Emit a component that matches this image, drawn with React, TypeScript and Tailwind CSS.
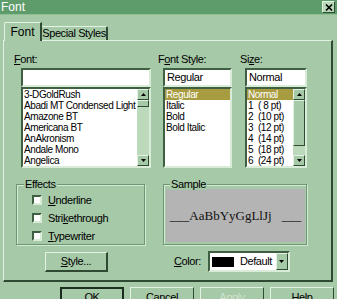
import React from 'react';

const fonts = [
    '3-DGoldRush',
    'Abadi MT Condensed Light',
    'Amazone BT',
    'Americana BT',
    'AnAkronism',
    'Andale Mono',
    'Angelica',
];
const styles = ['Regular', 'Italic', 'Bold', 'Bold Italic'];
const sizes = ['Normal', '1  ( 8 pt)', '2  (10 pt)', '3  (12 pt)', '4  (14 pt)', '5  (18 pt)', '6  (24 pt)'];

// raised 3D edge used by buttons and scroll parts
const raised = 'border border-t-[#e4f2e4] border-l-[#e4f2e4] border-r-[#2e4a32] border-b-[#2e4a32]';
const sunken = 'border-2 border-t-[#3f5f43] border-l-[#3f5f43] border-r-[#d8ecd8] border-b-[#d8ecd8]';

function Arrow({ down }: { down?: boolean }) {
    return (
        <svg width="5" height="3" viewBox="0 0 5 3">
            {down ? <path d="M0 0h5L2.5 3z" fill="#000" /> : <path d="M0 3h5L2.5 0z" fill="#000" />}
        </svg>
    );
}

function ScrollBar({ thumbTop, thumbHeight }: { thumbTop: number; thumbHeight: number }) {
    return (
        <div className="w-[12px] h-full flex flex-col bg-[#bcd9bc] shrink-0">
            <div className={`h-[11px] bg-[#a6c9a7] flex items-center justify-center ${raised}`}>
                <Arrow />
            </div>
            <div className="flex-1 relative">
                <div
                    className={`absolute left-0 right-0 bg-[#a6c9a7] ${raised}`}
                    style={{ top: thumbTop, height: thumbHeight }}
                />
            </div>
            <div className={`h-[11px] bg-[#a6c9a7] flex items-center justify-center ${raised}`}>
                <Arrow down />
            </div>
        </div>
    );
}

function ListBox({ items, selected, scroll }: { items: string[]; selected?: number; scroll?: [number, number] }) {
    return (
        <div className={`h-[81px] bg-white flex ${sunken}`}>
            <div className="flex-1 flex flex-col overflow-hidden">
                {items.map((it, i) => (
                    <div
                        key={it}
                        className={`h-[11px] shrink-0 leading-[11px] pl-[1px] whitespace-pre ${i === selected ? 'bg-[#a89c40] text-white' : ''}`}
                    >
                        {it}
                    </div>
                ))}
            </div>
            {scroll && <ScrollBar thumbTop={scroll[0]} thumbHeight={scroll[1]} />}
        </div>
    );
}

function TextBox({ value }: { value: string }) {
    return (
        <div className={`h-[19px] bg-white flex items-center pl-[2px] text-[11px] ${sunken}`}>{value}</div>
    );
}

function CheckRow({ pre, key1, post }: { pre: string; key1: string; post: string }) {
    return (
        <div className="flex items-center h-[18px]">
            <div className={`w-[10px] h-[10px] bg-white ${sunken} border`} />
            <span className="ml-[6px] text-[11px]">
                {pre}
                <span className="underline">{key1}</span>
                {post}
            </span>
        </div>
    );
}

function DlgButton({ children, def, disabled }: { children: React.ReactNode; def?: boolean; disabled?: boolean }) {
    return (
        <div
            className={`w-[64px] h-[20px] flex items-center justify-center bg-[#a6c9a7] text-[11px] ${
                def ? 'border-2 border-t-[#1c2e1f] border-l-[#1c2e1f] border-r-[#1c2e1f] border-b-[#1c2e1f]' : raised
            } ${disabled ? 'text-[#cfe3cf]' : 'text-black'}`}
        >
            {children}
        </div>
    );
}

export default function App() {
    return (
        <div
            className="w-[337px] h-[299px] bg-[#a6c9a7] overflow-hidden text-[10px] tracking-[-0.4px] text-black"
            style={{ fontFamily: '"Liberation Sans", Arial, sans-serif' }}
        >
            {/* Title bar */}
            <div className="h-[15px] bg-[#5f9c6b] flex items-center justify-between pl-[1px] pr-[2px] border-b border-[#8fbf93]">
                <span className="text-white text-[12px] leading-[12px] tracking-normal">Font</span>
                <div className={`w-[13px] h-[12px] bg-[#b9d8b9] flex items-center justify-center ${raised}`}>
                    <svg width="8" height="7" viewBox="0 0 8 7">
                        <path d="M1 0.5L7 6.5M7 0.5L1 6.5" stroke="#000" strokeWidth="1.6" />
                    </svg>
                </div>
            </div>

            {/* Tabs */}
            <div className="flex items-end h-[25px] pl-[4px] pt-[6px]">
                <div className="w-[38px] h-[19px] border-t border-l border-[#e4f2e4] border-r-2 border-r-[#2e4a32] rounded-tl-[2px] flex items-center justify-center relative top-[1px] bg-[#a6c9a7] z-10 text-[12px] tracking-normal">
                    Font
                </div>
                <div className="w-[66px] h-[14px] border-t border-[#e4f2e4] border-r-2 border-r-[#2e4a32] rounded-tr-[2px] flex items-center justify-center whitespace-nowrap text-[11px]">
                    Special Styles
                </div>
            </div>

            {/* Tab panel */}
            <div className="ml-[3px] w-[330px] h-[242px] border-t border-l border-[#e4f2e4] border-r-2 border-b-2 border-r-[#2e4a32] border-b-[#2e4a32]">
                <div className="flex pl-[10px] pt-[12px]">
                    <div className="w-[144px] flex flex-col">
                        <div className="h-[13px] leading-[13px] text-[11px]">
                            <span className="underline">F</span>ont:
                        </div>
                        <div className="ml-[7px] w-[130px] mt-[2px] flex flex-col">
                            <TextBox value="" />
                            <ListBox items={fonts} scroll={[0, 7]} />
                        </div>
                    </div>
                    <div className="w-[82px] flex flex-col">
                        <div className="h-[13px] leading-[13px] text-[11px]">
                            F<span className="underline">o</span>nt Style:
                        </div>
                        <div className="ml-[5px] w-[69px] mt-[2px] flex flex-col">
                            <TextBox value="Regular" />
                            <ListBox items={styles} selected={0} />
                        </div>
                    </div>
                    <div className="w-[80px] flex flex-col">
                        <div className="h-[13px] leading-[13px] text-[11px]">
                            Si<span className="underline">z</span>e:
                        </div>
                        <div className="ml-[5px] w-[62px] mt-[2px] flex flex-col">
                            <TextBox value="Normal" />
                            <ListBox items={sizes} selected={0} scroll={[0, 46]} />
                        </div>
                    </div>
                </div>

                {/* Effects / Sample */}
                <div className="flex pl-[12px] mt-[16px]">
                    <div className="relative w-[129px] h-[61px] border border-[#6f9673] shadow-[1px_1px_0_#d4ead4,inset_1px_1px_0_#d4ead4] pl-[15px] pt-[6px]">
                        <span className="absolute left-[7px] -top-[7px] px-[1px] bg-[#a6c9a7] leading-[12px] text-[11px]">Effects</span>
                        <CheckRow pre="" key1="U" post="nderline" />
                        <CheckRow pre="Stri" key1="k" post="ethrough" />
                        <CheckRow pre="" key1="T" post="ypewriter" />
                    </div>
                    <div className="relative ml-[18px] w-[144px] h-[61px] border border-[#6f9673] shadow-[1px_1px_0_#d4ead4,inset_1px_1px_0_#d4ead4] pl-[2px] pr-[1px] pt-[4px] pb-[2px]">
                        <span className="absolute left-[6px] -top-[7px] px-[1px] bg-[#a6c9a7] leading-[12px] text-[11px]">Sample</span>
                        <div
                            className="w-full h-full bg-[#b4b4b4] flex items-center justify-center text-[13px] tracking-normal text-[#111]"
                            style={{ fontFamily: '"Liberation Serif", "Times New Roman", serif' }}
                        >
                            <span>___</span>
                            <span>AaBbYyGgLlJj</span>
                            <span className="ml-[10px]">___</span>
                        </div>
                    </div>
                </div>

                {/* Style button / Color */}
                <div className="flex items-center mt-[6px] text-[11px]">
                    <div className={`ml-[41px] w-[63px] h-[20px] flex items-center justify-center ${raised} border-r-2 border-b-2`}>
                        <span>
                            <span className="underline">S</span>tyle...
                        </span>
                    </div>
                    <span className="ml-[66px]">
                        <span className="underline">C</span>olor:
                    </span>
                    <div className={`ml-[7px] w-[82px] h-[21px] bg-white flex items-center ${sunken}`}>
                        <div className="ml-[2px] w-[22px] h-[10px] bg-black" />
                        <span className="ml-[6px] flex-1">Default</span>
                        <div className={`w-[12px] h-full bg-[#a6c9a7] flex items-center justify-center ${raised}`}>
                            <Arrow down />
                        </div>
                    </div>
                </div>
            </div>

            {/* Dialog buttons */}
            <div className="flex pl-[60px] pt-[5px] gap-[6px]">
                <DlgButton def>OK</DlgButton>
                <DlgButton>Cancel</DlgButton>
                <DlgButton disabled>Apply</DlgButton>
                <DlgButton>Help</DlgButton>
            </div>
        </div>
    );
}
